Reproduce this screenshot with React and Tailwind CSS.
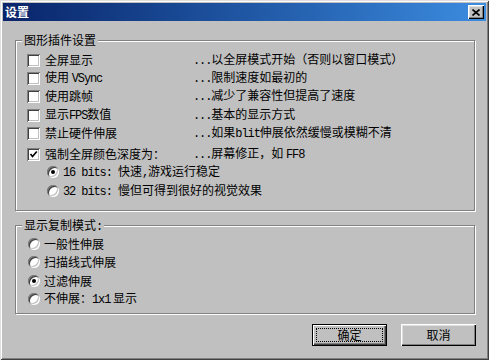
import React from "react";

const M = ({ children }) => (
  <span className="font-['Liberation_Mono','Noto_Sans_CJK_SC',monospace] text-[12px] tracking-[-1.1px]">
    {children}
  </span>
);

const Check = ({ checked }) => (
  <span className="w-[13px] h-[13px] shrink-0 bg-white flex items-center justify-center shadow-[inset_1px_1px_#808080,inset_-1px_-1px_#fff,inset_2px_2px_#404040,inset_-2px_-2px_#c0c0c0]">
    {checked && (
      <svg width="9" height="9" viewBox="0 0 9 9">
        <path d="M1.5 4 L3.5 6.5 L7.8 1.5" stroke="#000" strokeWidth="1.7" fill="none" />
      </svg>
    )}
  </span>
);

const Radio = ({ checked }) => (
  <span className="w-[12px] h-[12px] shrink-0 rounded-full bg-white flex items-center justify-center shadow-[inset_1px_1px_#808080,inset_-1px_-1px_#fff,inset_2px_2px_#404040,inset_-2px_-2px_#c0c0c0]">
    {checked && <span className="w-[4px] h-[4px] rounded-full bg-black" />}
  </span>
);

const Row = ({ checked, label, desc, extra = "" }) => (
  <div className={"flex items-center h-[18px] pl-[11px] " + extra}>
    <div className="flex items-center w-[166px] shrink-0 gap-[5px]">
      <Check checked={checked} />
      <span>{label}</span>
    </div>
    <div>
      <M>...</M>
      {desc}
    </div>
  </div>
);

const RadioRow = ({ checked, children, extra = "" }) => (
  <div className={"flex items-center h-[18px] gap-[4px] " + extra}>
    <Radio checked={checked} />
    <span>{children}</span>
  </div>
);

export default function App() {
  return (
    <div className="w-[489px] h-[360px] bg-[#c0c0c0] p-[3px] text-[12px] leading-[14px] text-black font-['Noto_Sans_CJK_SC',sans-serif] shadow-[inset_1px_1px_#dfdfdf,inset_-1px_-1px_#404040,inset_2px_2px_#fff,inset_-2px_-2px_#808080] flex flex-col">
      {/* Title bar */}
      <div className="h-[18px] shrink-0 flex items-center justify-between pl-[2px] pr-[2px] bg-gradient-to-r from-[#0a246a] to-[#3c8ce0]">
        <span className="text-white font-bold">设置</span>
        <span className="w-[16px] h-[14px] bg-[#c0c0c0] flex items-center justify-center shadow-[inset_1px_1px_#fff,inset_-1px_-1px_#000,inset_-2px_-2px_#808080,inset_2px_2px_#dfdfdf]">
          <svg width="8" height="7" viewBox="0 0 8 7">
            <path d="M0.5 0.5 L7.5 6.5 M7.5 0.5 L0.5 6.5" stroke="#000" strokeWidth="1.6" />
          </svg>
        </span>
      </div>

      {/* Group 1 */}
      <div className="mt-[19px] ml-[12px] w-[460px] border border-[#808080] shadow-[inset_1px_1px_#fff,1px_1px_#fff] pb-[10px]">
        <div className="-mt-[8px] h-[14px] ml-[6px] px-[2px] w-fit bg-[#c0c0c0]">图形插件设置</div>
        <Row extra="mt-[4px]" label="全屏显示" desc="以全屏模式开始（否则以窗口模式）" />
        <Row label={<>使用 <M>VSync</M></>} desc="限制速度如最初的" />
        <Row label="使用跳帧" desc="减少了兼容性但提高了速度" />
        <Row extra="mt-[1px]" label={<>显示<M>FPS</M>数值</>} desc="基本的显示方式" />
        <Row label="禁止硬件伸展" desc={<>如果<M>blit</M>伸展依然缓慢或模糊不清</>} />
        <Row extra="mt-[3px]" checked label="强制全屏颜色深度为：" desc={<>屏幕修正，如 <M>FF8</M></>} />
        <div className="pl-[31px]">
          <RadioRow checked>
            <M>16 bits: </M>快速<M>,</M>游戏运行稳定
          </RadioRow>
          <RadioRow extra="mt-[1px]">
            <M>32 bits: </M>慢但可得到很好的视觉效果
          </RadioRow>
        </div>
      </div>

      {/* Group 2 */}
      <div className="mt-[14px] ml-[12px] w-[460px] border border-[#808080] shadow-[inset_1px_1px_#fff,1px_1px_#fff] pb-[5px]">
        <div className="-mt-[8px] h-[14px] ml-[6px] px-[2px] w-fit bg-[#c0c0c0]">显示复制模式<M>:</M></div>
        <div className="pl-[12px] mt-[3px]">
          <RadioRow>一般性伸展</RadioRow>
          <RadioRow>扫描线式伸展</RadioRow>
          <RadioRow checked extra="mt-[1px]">过滤伸展</RadioRow>
          <RadioRow>
            不伸展：<M>1x1</M> 显示
          </RadioRow>
        </div>
      </div>

      {/* Buttons */}
      <div className="mt-[10px] flex justify-end gap-[14px] pr-[10px]">
        <button className="w-[75px] h-[22px] border border-black bg-[#c0c0c0] p-[3px] shadow-[inset_1px_1px_#fff,inset_-1px_-1px_#404040,inset_-2px_-2px_#808080]">
          <span className="flex items-center justify-center w-full h-full border border-dotted border-black">确定</span>
        </button>
        <button className="w-[75px] h-[22px] bg-[#c0c0c0] flex items-center justify-center shadow-[inset_1px_1px_#fff,inset_-1px_-1px_#000,inset_-2px_-2px_#808080,inset_2px_2px_#dfdfdf]">
          取消
        </button>
      </div>
    </div>
  );
}
